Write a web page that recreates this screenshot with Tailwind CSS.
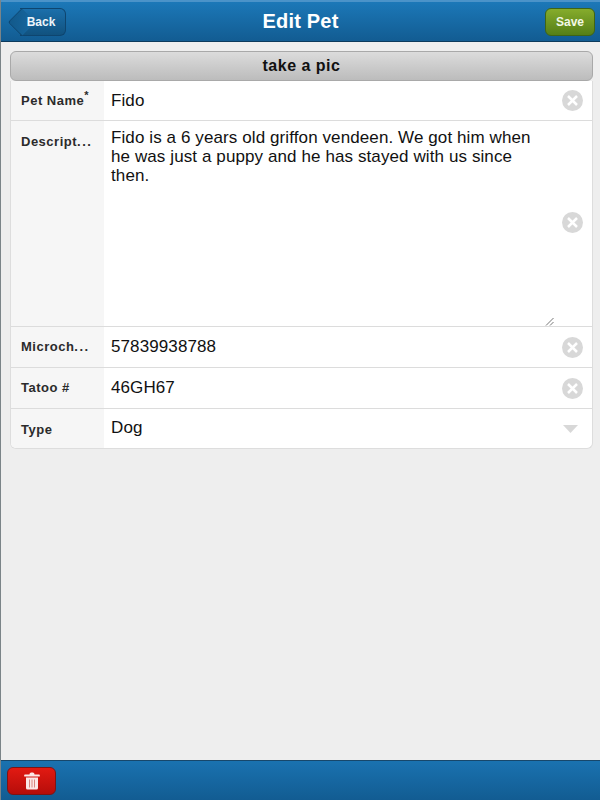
<!DOCTYPE html>
<html>
<head>
<meta charset="utf-8">
<script src="https://cdn.jsdelivr.net/npm/@tailwindcss/browser@4"></script>
</head>
<body class="w-[600px] h-[800px] overflow-hidden font-['Liberation_Sans',Arial,sans-serif]">
<div class="relative flex h-[800px] w-[600px] flex-col bg-[#eeeeee] border-l border-[#7b8488]">
  <header class="relative flex h-[42px] shrink-0 items-center justify-between border-b border-[#0d3a5c] border-t-2 border-t-[#4b93c9] bg-gradient-to-b from-[#1c78b8] to-[#125c92] pl-[7px] pr-[5px]">
    <a class="relative ml-[12px] flex h-[28px] w-[46px] items-center justify-center rounded-r-[6px] border border-l-0 border-[#0e456f] bg-gradient-to-b from-[#1b6fab] to-[#11527f] text-[12px] font-bold text-[#eef5fa]">
      <span class="absolute left-[-8px] top-[3.5px] h-[19.5px] w-[19.5px] rotate-45 rounded-bl-[3px] border-b border-l border-[#0e456f] bg-gradient-to-tr from-[#12598a] to-[#1768a2]"></span>
      <span class="relative -ml-[3px]">Back</span>
    </a>
    <h1 class="absolute inset-x-0 top-[6px] text-center text-[20px] leading-[26px] tracking-[0.2px] font-bold text-white">Edit Pet</h1>
    <a class="flex h-[28px] w-[50px] items-center justify-center rounded-[6px] border border-[#3f6415] bg-gradient-to-b from-[#86ac2c] to-[#557f17] text-[12px] font-bold text-[#f3f8e6]">Save</a>
  </header>

  <main class="flex-1 pl-[9px] pr-[7px] pt-[9px]">
    <button class="block h-[30px] w-full rounded-[6px] border border-[#a9a9a9] bg-gradient-to-b from-[#dcdcdc] to-[#bcbcbc] text-center text-[16px] tracking-[0.5px] font-bold text-[#111]">take a pic</button>
    <div class="overflow-hidden rounded-b-[6px] border-b border-r border-l border-[#dddddd] bg-white">
      <div class="flex h-[40px] border-b border-[#dcdcdc]">
        <div class="flex w-[93px] shrink-0 items-center bg-[#f6f6f6] pl-[10px] text-[13px] font-bold tracking-[0.5px] text-[#2b2b2b]">Pet Name<sup class="text-[11px]">*</sup></div>
        <div class="flex flex-1 items-center justify-between pl-[7px] pr-[9px] text-[17px] tracking-[0.1px] text-[#111]">
          <span>Fido</span>
          <svg class="size-[21px]" viewBox="0 0 21 21"><circle cx="10.5" cy="10.5" r="10.5" fill="#d8d8d8"/><path d="M6 6l9 9M15 6l-9 9" stroke="#fff" stroke-width="2.500"/></svg>
        </div>
      </div>
      <div class="flex h-[206px] border-b border-[#dcdcdc]">
        <div class="w-[93px] shrink-0 bg-[#f6f6f6] pl-[10px] pt-[13px] text-[13px] leading-[16px] font-bold tracking-[0.5px] text-[#2b2b2b]">Descript<span class="tracking-[1.5px]">...</span></div>
        <div class="relative flex-1 pl-[7px] pr-[46px] pt-[7px] text-[17px] leading-[19px] tracking-[0.1px] text-[#111]">
          Fido is a 6 years old griffon vendeen. We got him when he was just a puppy and he has stayed with us since then.
          <svg class="absolute right-[9px] top-[91px] size-[21px]" viewBox="0 0 21 21"><circle cx="10.5" cy="10.5" r="10.5" fill="#d8d8d8"/><path d="M6 6l9 9M15 6l-9 9" stroke="#fff" stroke-width="2.500"/></svg>
          <svg class="absolute bottom-[0px] right-[38px] size-[9px]" viewBox="0 0 9 9"><path d="M1 8.500L8.500 1M5 8.500L8.500 5" stroke="#777" stroke-width="1"/></svg>
        </div>
      </div>
      <div class="flex h-[41px] border-b border-[#dcdcdc]">
        <div class="flex w-[93px] shrink-0 items-center bg-[#f6f6f6] pl-[10px] text-[13px] font-bold tracking-[0.5px] text-[#2b2b2b]">Microch<span class="tracking-[1.5px]">...</span></div>
        <div class="flex flex-1 items-center justify-between pl-[7px] pr-[9px] text-[17px] tracking-[0.1px] text-[#111]">
          <span>57839938788</span>
          <svg class="size-[21px]" viewBox="0 0 21 21"><circle cx="10.5" cy="10.5" r="10.5" fill="#d8d8d8"/><path d="M6 6l9 9M15 6l-9 9" stroke="#fff" stroke-width="2.500"/></svg>
        </div>
      </div>
      <div class="flex h-[41px] border-b border-[#dcdcdc]">
        <div class="flex w-[93px] shrink-0 items-center bg-[#f6f6f6] pl-[10px] text-[13px] font-bold tracking-[0.5px] text-[#2b2b2b]">Tatoo #</div>
        <div class="flex flex-1 items-center justify-between pl-[7px] pr-[9px] text-[17px] tracking-[0.1px] text-[#111]">
          <span>46GH67</span>
          <svg class="size-[21px]" viewBox="0 0 21 21"><circle cx="10.5" cy="10.5" r="10.5" fill="#d8d8d8"/><path d="M6 6l9 9M15 6l-9 9" stroke="#fff" stroke-width="2.500"/></svg>
        </div>
      </div>
      <div class="flex h-[39px]">
        <div class="flex w-[93px] shrink-0 items-center bg-[#f6f6f6] pl-[10px] pt-[2px] text-[13px] font-bold tracking-[0.5px] text-[#2b2b2b]">Type</div>
        <div class="flex flex-1 items-center justify-between pl-[7px] pr-[14px] text-[17px] tracking-[0.1px] text-[#111]">
          <span class="-mt-[2px]">Dog</span>
          <svg class="h-[8px] w-[15px]" viewBox="0 0 15 8"><path d="M0 0h15L7.500 8z" fill="#d8d8d8"/></svg>
        </div>
      </div>
    </div>
  </main>

  <footer class="flex h-[40px] shrink-0 items-start border-t border-[#17476b] bg-gradient-to-b from-[#1a72b0] to-[#125c92] pl-[6px] pt-[6px]">
    <a class="flex h-[28px] w-[49px] items-center justify-center rounded-[6px] border border-[#7d1414] bg-gradient-to-b from-[#e21a12] to-[#b60d0a]">
      <svg class="h-[18px] w-[16px]" viewBox="0 0 16 18"><path d="M5.500 2.500C5.500 1 6.500.5 8 .5s2.500.5 2.500 2H15a.8.800 0 0 1 .8 1v1H.2v-1a.8.800 0 0 1 .8-1z" fill="#fbe9e7"/><path d="M2 5.500h12V16a1.500 1.500 0 0 1-1.500 1.500h-9A1.500 1.500 0 0 1 2 16z" fill="#fbe9e7"/><path d="M5.500 7.500v8M8 7.500v8M10.500 7.500v8" stroke="#d9867f" stroke-width="1"/></svg>
    </a>
  </footer>
</div>
</body>
</html>
